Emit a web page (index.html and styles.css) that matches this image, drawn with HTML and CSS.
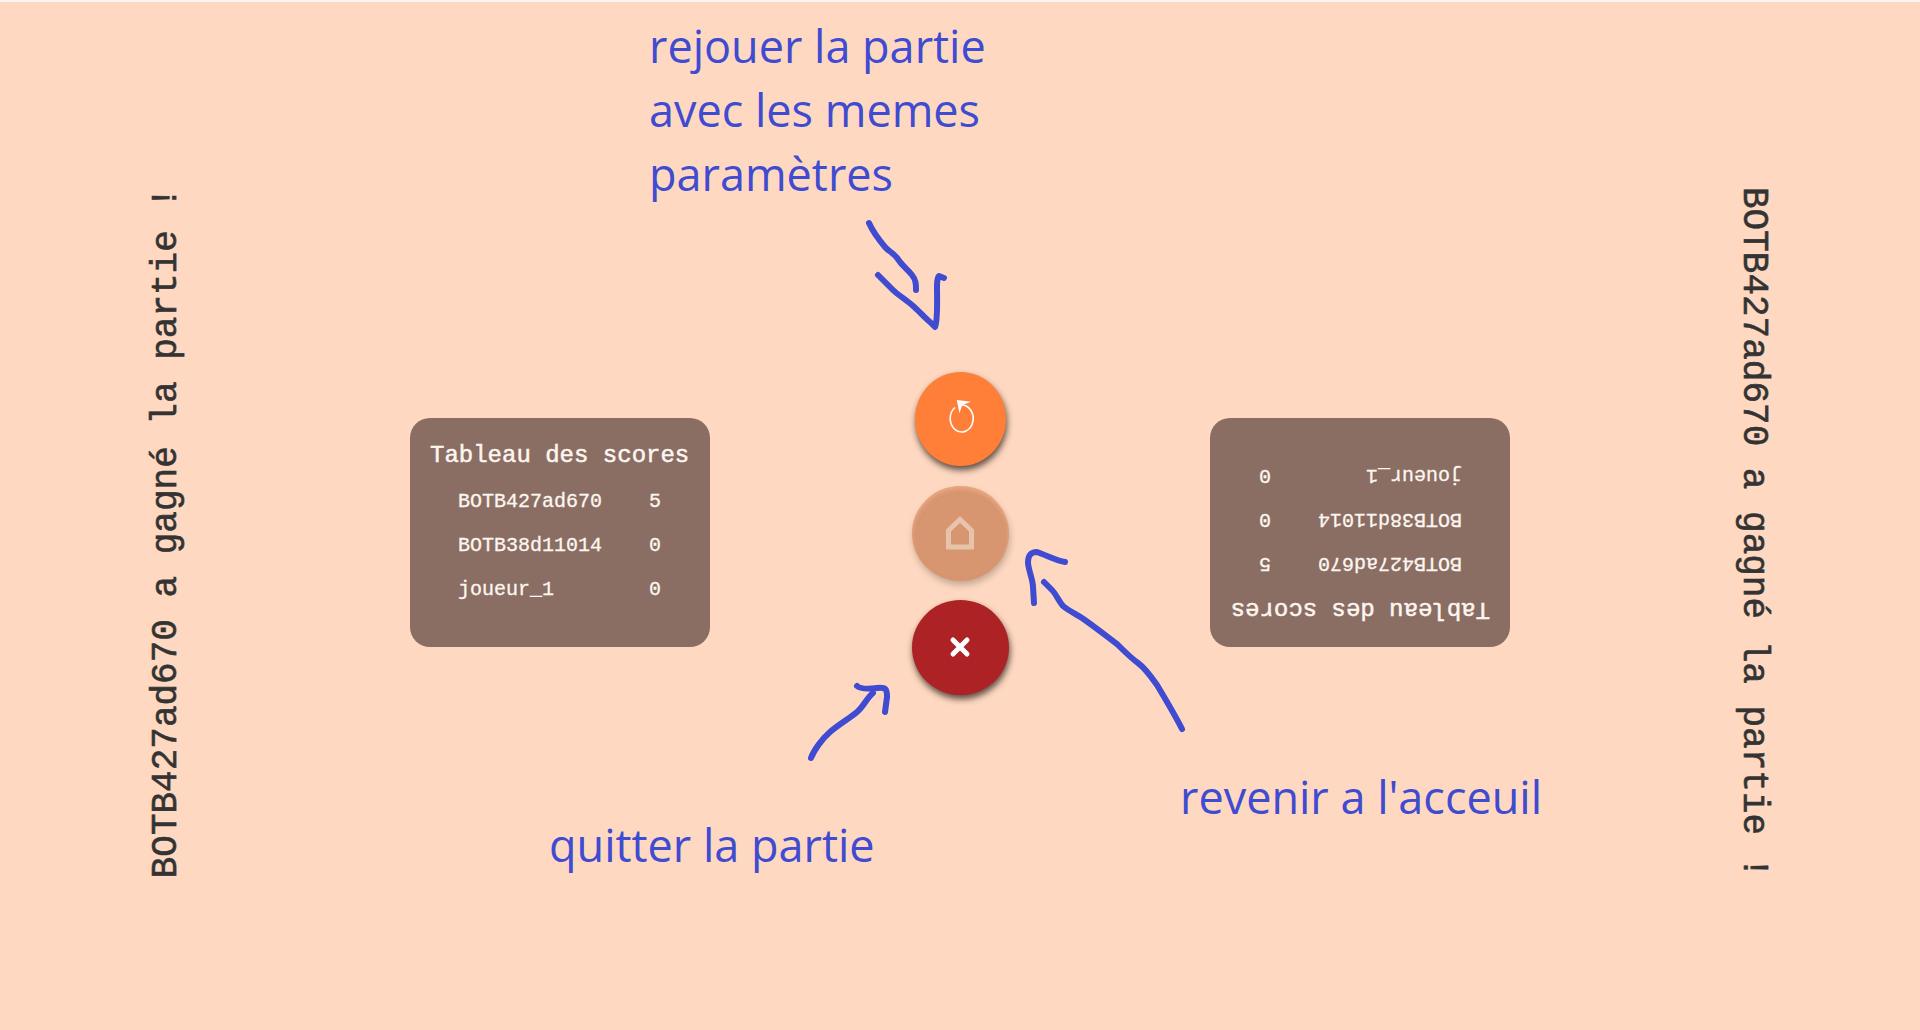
FILE: index.html
```html
<!DOCTYPE html>
<html lang="fr">
<head>
    <meta charset="utf-8"/>
    <title>Fin de partie</title>
    <link rel="stylesheet" href="styles.css">
</head>
<body>
<div class="top-strip"></div>

<main class="board">
    <p class="winner winner-left">BOTB427ad670 a gagné la partie !</p>

    <section class="scores">
        <h2>Tableau des scores</h2>
        <table>
            <tr><td class="name">BOTB427ad670</td><td class="score">5</td></tr>
            <tr><td class="name">BOTB38d11014</td><td class="score">0</td></tr>
            <tr><td class="name">joueur_1</td><td class="score">0</td></tr>
        </table>
    </section>

    <div class="actions">
        <button class="round-btn btn-replay" aria-label="rejouer">
            <svg class="icon-replay" width="30" height="34" viewBox="0 0 30 34">
                <path class="icon-line" d="M10 5.500A11.500 13.500 0 1 0 16 3"/>
                <path class="icon-fill" d="M11.800 -2L26.200 -0.300L17.200 3L14.500 11.300Z"/>
            </svg>
        </button>
        <button class="round-btn btn-home" aria-label="accueil">
            <svg width="30" height="34" viewBox="0 0 30 34">
                <path class="icon-home" d="M3.500 31V14.500L15 3.500L26.500 14.500V31Z"/>
            </svg>
        </button>
        <button class="round-btn btn-quit" aria-label="quitter">
            <svg width="22" height="22" viewBox="0 0 22 22">
                <path class="icon-cross" d="M4 4L18 18M18 4L4 18"/>
            </svg>
        </button>
    </div>

    <section class="scores scores-flipped">
        <h2>Tableau des scores</h2>
        <table>
            <tr><td class="name">BOTB427ad670</td><td class="score">5</td></tr>
            <tr><td class="name">BOTB38d11014</td><td class="score">0</td></tr>
            <tr><td class="name">joueur_1</td><td class="score">0</td></tr>
        </table>
    </section>

    <p class="winner winner-right">BOTB427ad670 a gagné la partie !</p>
</main>

<!-- notes dessinées par dessus la capture -->
<svg class="arrows" width="1920" height="1030" viewBox="0 0 1920 1030">
    <path d="M869 223C873 232 880 241 885 247S893 251 900 262C905 268 908 270 912 275S916 284 916 290"/>
    <path d="M878 275C884 281 889 286 893 290S906 300 912 305S925 318 930 322L935 327C938 320 937 300 937 287C937 280 938 276 939 276L944 278"/>
    <path d="M811 758C814 750 822 739 830 732S850 718 857 712S866 699 873 693"/>
    <path d="M857 686C860 689 868 689 877 688S887 689 887 697L885 712"/>
    <path d="M1182 729C1175 715 1166 700 1157 685C1150 675 1145 668 1138 663S1125 652 1117 644C1105 635 1095 627 1082 618C1072 612 1068 610 1063 606C1058 600 1056 594 1052 590L1044 582"/>
    <path d="M1065 562C1058 561 1048 556 1037 552C1031 552 1028 555 1028 563C1029 572 1033 580 1033 587L1034 603"/>
</svg>

<p class="note note-replay">rejouer la partie<br>avec les memes<br>paramètres</p>
<p class="note note-home">revenir a l'acceuil</p>
<p class="note note-quit">quitter la partie</p>
</body>
</html>
```

FILE: styles.css
```css
body {
    margin: 0;
    height: 1030px;
    overflow: hidden;
    position: relative;
    background-color: #fed8c0;
    font-family: "Liberation Mono", monospace;
}

.top-strip {
    height: 2px;
    background-color: #fbf3ee;
}

.board {
    box-sizing: border-box;
    height: 1028px;
    padding-top: 33px;
    display: grid;
    grid-template-columns: 410px 300px 1fr 300px 410px;
    align-items: center;
}

.winner {
    margin: 0;
    font-size: 36px;
    line-height: 34px;
    color: #333;
    font-weight: normal;
    -webkit-text-stroke: 0.6px #333;
    writing-mode: vertical-rl;
    white-space: nowrap;
}

.winner-left {
    justify-self: start;
    margin-left: 150px;
    transform: rotate(180deg);
}

.winner-right {
    justify-self: end;
    margin-right: 150px;
}

.scores {
    box-sizing: border-box;
    height: 229px;
    padding: 24px 20px;
    background-color: #8a6d63;
    border-radius: 20px;
    color: #fdf6f0;
}

.scores-flipped {
    transform: rotate(180deg);
}

.scores h2 {
    margin: 0 0 10px;
    font-size: 24px;
    line-height: 27px;
    font-weight: normal;
    -webkit-text-stroke: 0.5px #fdf6f0;
    white-space: nowrap;
}

.scores table {
    border-collapse: collapse;
    font-size: 20px;
    font-weight: normal;
    -webkit-text-stroke: 0.3px #fdf6f0;
}

.scores td {
    height: 44px;
    padding: 0;
}

.name {
    width: 191px;
    padding-left: 28px !important;
}

.score {
    width: 30px;
}

.actions {
    justify-self: center;
    margin-top: 1px;
    display: flex;
    flex-direction: column;
    align-items: center;
    gap: 20px;
}

.round-btn {
    display: flex;
    align-items: center;
    justify-content: center;
    width: 97px;
    height: 95px;
    padding: 0;
    border: none;
    border-radius: 50%;
    box-shadow: 1px 4px 6px rgba(40, 30, 25, 0.75);
}

.btn-replay {
    width: 91px;
    height: 94px;
    background-color: #ff7f38;
}

.btn-home {
    background-color: #d79570;
    box-shadow: 1px 4px 6px rgba(40, 30, 25, 0.25), inset 0 3px 4px rgba(255, 190, 150, 0.5);
}

.btn-quit {
    margin-top: -1px;
    background-color: #ad2225;
}

.icon-replay {
    overflow: visible;
    margin-left: -1px;
}

.icon-line {
    fill: none;
    stroke: #fff;
    stroke-width: 1.6;
}

.icon-fill {
    fill: #fff;
}

.icon-home {
    fill: none;
    stroke: #e8c3ab;
    stroke-width: 5;
}

.icon-cross {
    fill: none;
    stroke: #fff;
    stroke-width: 5;
    stroke-linecap: round;
}

.arrows {
    position: absolute;
    left: 0;
    top: 0;
    pointer-events: none;
}

.arrows path {
    fill: none;
    stroke: #3f4bd1;
    stroke-width: 6;
    stroke-linecap: round;
    stroke-linejoin: round;
}

.note {
    position: absolute;
    margin: 0;
    font-family: "Open Sans", sans-serif;
    font-size: 45px;
    line-height: 64px;
    color: #3f4bd1;
    white-space: nowrap;
}

.note-replay {
    left: 649px;
    top: 14px;
}

.note-home {
    left: 1180px;
    top: 765px;
}

.note-quit {
    left: 549px;
    top: 813px;
}
```
